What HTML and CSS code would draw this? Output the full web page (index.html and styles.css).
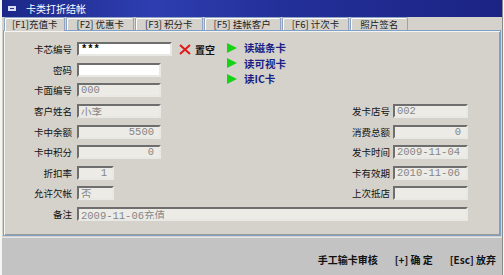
FILE: index.html
```html
<!DOCTYPE html>
<html>
<head>
    <meta charset="utf-8">
    <title>卡类打折结帐</title>
    <link rel="stylesheet" href="styles.css">
</head>
<body>
    <div class="window">
        <!-- 标题栏 -->
        <div class="titlebar">
            <svg class="title-icon" width="8" height="7" viewBox="0 0 8 7">
                <rect x="0" y="1" width="8" height="5" fill="#d8dcf4"/>
                <rect x="2" y="3" width="4" height="1" fill="#2a3590"/>
            </svg>
            <span>卡类打折结帐</span>
        </div>

        <!-- 页签 -->
        <div class="tabs">
            <div class="tab active">[F1]充值卡</div>
            <div class="tab">[F2] 优惠卡</div>
            <div class="tab">[F3] 积分卡</div>
            <div class="tab">[F5] 挂帐客户</div>
            <div class="tab">[F6] 计次卡</div>
            <div class="tab">照片签名</div>
        </div>

        <div class="panel">
            <div class="form">
                <label class="lbl">卡芯编号</label>
                <div class="cell"><input class="field w-long strong" type="text" value="***"></div>
                <div class="clear-btn">
                    <svg width="12" height="11" viewBox="0 0 12 11">
                        <path d="M1 1 L11 10 M11 1 L1 10" stroke="#e01818" stroke-width="2" fill="none"/>
                    </svg>
                    <span>置空</span>
                </div>
                <div class="actions">
                    <div class="read"><span class="arrow"></span>读磁条卡</div>
                    <div class="read"><span class="arrow"></span>读可视卡</div>
                    <div class="read"><span class="arrow"></span>读IC卡</div>
                </div>

                <label class="lbl">密码</label>
                <div class="cell"><input class="field w-mid" type="text" value=""></div>

                <label class="lbl">卡面编号</label>
                <div class="cell"><input class="field w-mid" type="text" value="000" disabled></div>

                <label class="lbl">客户姓名</label>
                <div class="cell"><input class="field w-mid" type="text" value="小李" disabled></div>
                <label class="lbl rl">发卡店号</label>
                <div class="rcell"><input class="field w-right" type="text" value="002" disabled></div>

                <label class="lbl">卡中余额</label>
                <div class="cell"><input class="field w-mid num" type="text" value="5500" disabled></div>
                <label class="lbl rl">消费总额</label>
                <div class="rcell"><input class="field w-right num" type="text" value="0" disabled></div>

                <label class="lbl">卡中积分</label>
                <div class="cell"><input class="field w-mid num" type="text" value="0" disabled></div>
                <label class="lbl rl">发卡时间</label>
                <div class="rcell"><input class="field w-right" type="text" value="2009-11-04" disabled></div>

                <label class="lbl">折扣率</label>
                <div class="cell"><input class="field w-short num" type="text" value="1" disabled></div>
                <label class="lbl rl">卡有效期</label>
                <div class="rcell"><input class="field w-right" type="text" value="2010-11-06" disabled></div>

                <label class="lbl">允许欠帐</label>
                <div class="cell"><input class="field w-short" type="text" value="否" disabled></div>
                <label class="lbl rl">上次抵店</label>
                <div class="rcell"><input class="field w-right" type="text" value="" disabled></div>

                <label class="lbl">备注</label>
                <div class="memo"><input class="field" type="text" value="2009-11-06充值" disabled></div>
            </div>
        </div>

        <!-- 底部按钮 -->
        <div class="footer">
            <span class="fbtn">手工输卡审核</span>
            <span class="fbtn">[+] 确 定</span>
            <span class="fbtn">[Esc] 放弃</span>
        </div>
    </div>
</body>
</html>
```

FILE: styles.css
```css
body {
    margin: 0;
    background-color: #f4f6f2;
    font-family: "Noto Sans CJK SC", "Liberation Sans", sans-serif;
    font-size: 9.5px;
    color: #111;
}

.window {
    width: 500px;
    margin-left: 2px;
    background-color: #d5d2cb;
    border-right: 1px solid #8a8a8a;
}

.titlebar {
    height: 17px;
    display: flex;
    align-items: center;
    gap: 10px;
    padding-left: 6px;
    background: linear-gradient(90deg, #1c2888 0%, #2e3eb0 30%, #24309a 55%, #1b2484 100%);
    color: #fff;
    font-size: 10px;
}

.tabs {
    height: 13px;
    display: flex;
    align-items: flex-end;
    padding-left: 2px;
    background-color: #d5d2cb;
}

.tab {
    height: 12px;
    line-height: 12px;
    padding: 0 9px;
    margin-right: 1px;
    border: 1px solid #8ea4c2;
    border-bottom: none;
    border-radius: 2px 2px 0 0;
    box-shadow: inset 1px 1px 0 #fff;
    white-space: nowrap;
    color: #222;
}

.tab.active {
    height: 13px;
    padding: 0 7px;
    background-color: #d5d2cb;
    margin-bottom: -1px;
    position: relative;
}

.panel {
    border: 1px solid #7f9fc8;
    margin-left: 1px;
    margin-right: 1px;
    box-shadow: inset 1px 1px 0 #f4f4f0, inset -1px -1px 0 #9a9a96;
    padding: 8px 0 11px 0;
}

.form {
    display: grid;
    grid-template-columns: 73px 101px 48px 1fr 60px 78px;
    grid-auto-rows: 20.6px;
    align-items: center;
    padding-right: 29px;
}

.lbl {
    grid-column: 1;
    text-align: right;
    padding-right: 5px;
    white-space: nowrap;
}

.lbl.rl {
    grid-column: 5;
    padding-right: 3px;
}

.cell {
    grid-column: 2;
    display: flex;
}

.rcell {
    grid-column: 6;
    display: flex;
}

.memo {
    grid-column: 2 / 7;
    display: flex;
    padding-right: 3px;
}

.field {
    box-sizing: border-box;
    height: 14px;
    margin: 0;
    padding: 0 2px;
    border: 2px solid;
    border-color: #6e6e6e #e8e8e4 #e8e8e4 #6e6e6e;
    background-color: #fff;
    font-family: "Liberation Mono", "Noto Sans CJK SC", monospace;
    font-size: 10.5px;
    color: #000;
    outline: none;
}

.field:disabled {
    background-color: #ecebe6;
    color: #858585;
}

.field.strong {
    font-weight: bold;
}

.memo .field {
    width: 100%;
}

.w-long { width: 95px; }
.w-mid { width: 84px; }
.w-short { width: 37px; }
.w-right { width: 75px; }

.num {
    text-align: right;
    padding-right: 5px;
}

.clear-btn {
    grid-column: 3;
    display: flex;
    align-items: center;
    gap: 4px;
    padding-left: 1px;
    font-size: 10px;
    font-weight: bold;
}

.actions {
    grid-column: 4;
    grid-row: 1 / 4;
    align-self: start;
    padding-top: 1px;
    padding-left: 1px;
    display: flex;
    flex-direction: column;
}

.read {
    height: 15.5px;
    display: flex;
    align-items: center;
    gap: 7px;
    font-size: 10.5px;
    font-weight: bold;
    color: #1a1f86;
}

.arrow {
    width: 0;
    height: 0;
    border-top: 5px solid transparent;
    border-bottom: 5px solid transparent;
    border-left: 10px solid #14d414;
}

.footer {
    margin-top: 1px;
    height: 40px;
    box-sizing: border-box;
    background-color: #c3c3c3;
    border-top: 1px solid #e4e4e4;
    border-bottom: 1px solid #8a8a8a;
    display: flex;
    align-items: center;
    justify-content: flex-end;
    gap: 17px;
    padding-right: 6px;
    padding-top: 4px;
    font-size: 10px;
    font-weight: bold;
}
```
